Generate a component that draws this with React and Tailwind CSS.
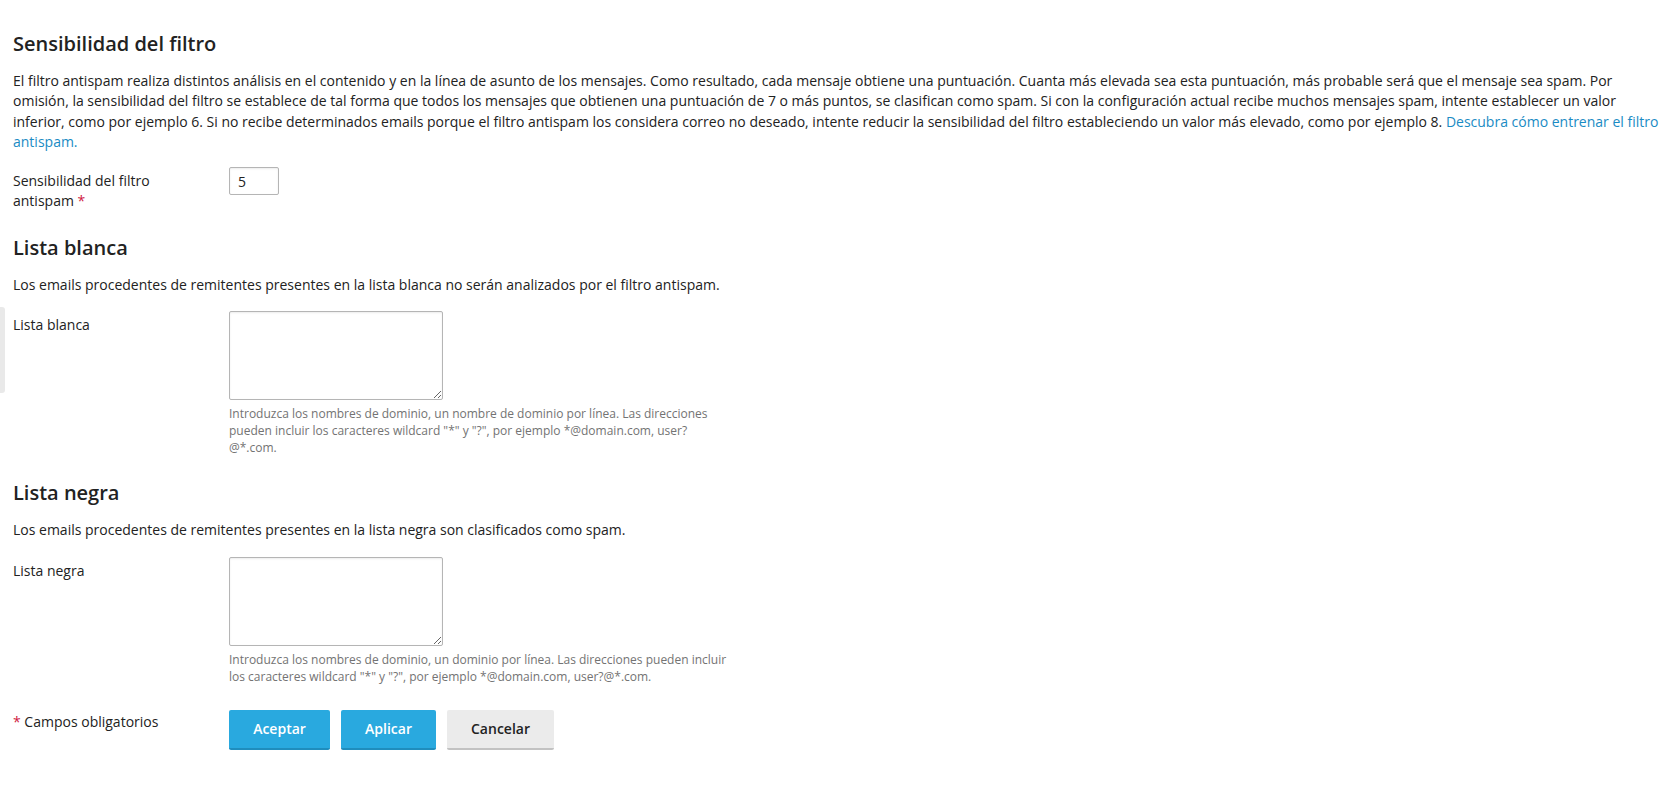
import React from "react";

function Req() {
  return <span className="text-[#d0193f]">*</span>;
}

export default function App() {
  return (
    <div className="relative min-h-screen bg-white font-['Open_Sans',sans-serif] text-[14px] leading-5 text-[#222]">
      <div className="absolute left-0 top-[307px] h-[86px] w-[5px] rounded-r-[3px] bg-[#e9e9e9]" />
      <div className="pl-[13px] pr-[5px] pt-[32px]">
        <h2 className="text-[20px] leading-6 font-semibold text-[#222]">Sensibilidad del filtro</h2>
        <p className="mt-[15px] leading-[20.3px]">
          El filtro antispam realiza distintos análisis en el contenido y en la línea de asunto de los mensajes. Como resultado, cada mensaje obtiene una puntuación. Cuanta más elevada sea esta puntuación, más probable será que el mensaje sea spam. Por omisión, la sensibilidad del filtro se establece de tal forma que todos los mensajes que obtienen una puntuación de 7 o más puntos, se clasifican como spam. Si con la configuración actual recibe muchos mensajes spam, intente establecer un valor inferior, como por ejemplo 6. Si no recibe determinados emails porque el filtro antispam los considera correo no deseado, intente reducir la sensibilidad del filtro estableciendo un valor más elevado, como por ejemplo 8.{" "}
          <a href="#" className="text-[#1a8bc4]">Descubra cómo entrenar el filtro antispam.</a>
        </p>

        <div className="mt-[15px] flex">
          <div className="w-[216px] shrink-0 pr-[16px] pt-[4px]">
            Sensibilidad del filtro antispam <Req />
          </div>
          <input
            type="text"
            defaultValue="5"
            className="h-[28px] w-[50px] rounded-[2px] border border-[#b5b5b5] px-[8px] text-[14px] text-[#222] shadow-[inset_0_1px_2px_rgba(0,0,0,0.08)] outline-none"
          />
        </div>

        <h2 className="mt-[25px] text-[20px] leading-6 font-semibold text-[#222]">Lista blanca</h2>
        <p className="mt-[15px]">
          Los emails procedentes de remitentes presentes en la lista blanca no serán analizados por el filtro antispam.
        </p>

        <div className="mt-[16px] flex">
          <div className="w-[216px] shrink-0 pr-[16px] pt-[4px]">Lista blanca</div>
          <div className="flex flex-col">
            <textarea className="block h-[89px] w-[214px] rounded-[2px] border border-[#b5b5b5] shadow-[inset_0_1px_2px_rgba(0,0,0,0.08)] outline-none" />
            <div className="mt-[5px] max-w-[480px] text-[12px] leading-[17px] text-[#737373]">
              Introduzca los nombres de dominio, un nombre de dominio por línea. Las direcciones pueden incluir los caracteres wildcard "*" y "?", por ejemplo *@domain.com, user?@*.com.
            </div>
          </div>
        </div>

        <h2 className="mt-[25px] text-[20px] leading-6 font-semibold text-[#222]">Lista negra</h2>
        <p className="mt-[15px]">
          Los emails procedentes de remitentes presentes en la lista negra son clasificados como spam.
        </p>

        <div className="mt-[17px] flex">
          <div className="w-[216px] shrink-0 pr-[16px] pt-[4px]">Lista negra</div>
          <div className="flex flex-col">
            <textarea className="block h-[89px] w-[214px] rounded-[2px] border border-[#b5b5b5] shadow-[inset_0_1px_2px_rgba(0,0,0,0.08)] outline-none" />
            <div className="mt-[5px] max-w-[510px] text-[12px] leading-[17px] text-[#737373]">
              Introduzca los nombres de dominio, un dominio por línea. Las direcciones pueden incluir los caracteres wildcard "*" y "?", por ejemplo *@domain.com, user?@*.com.
            </div>
          </div>
        </div>

        <div className="mt-[25px] flex">
          <div className="w-[216px] shrink-0 pr-[16px] pt-[2px]">
            <Req /> Campos obligatorios
          </div>
          <div className="flex gap-[11px]">
            <button className="h-[40px] w-[101px] rounded-[2px] border-b-2 border-[#1f8dbd] bg-[#29a9df] text-[14px] font-semibold text-white">Aceptar</button>
            <button className="h-[40px] w-[95px] rounded-[2px] border-b-2 border-[#1f8dbd] bg-[#29a9df] text-[14px] font-semibold text-white">Aplicar</button>
            <button className="h-[40px] w-[107px] rounded-[2px] border-b-2 border-[#c2c2c2] bg-[#ebebeb] text-[14px] font-semibold text-[#222]">Cancelar</button>
          </div>
        </div>
      </div>
    </div>
  );
}
